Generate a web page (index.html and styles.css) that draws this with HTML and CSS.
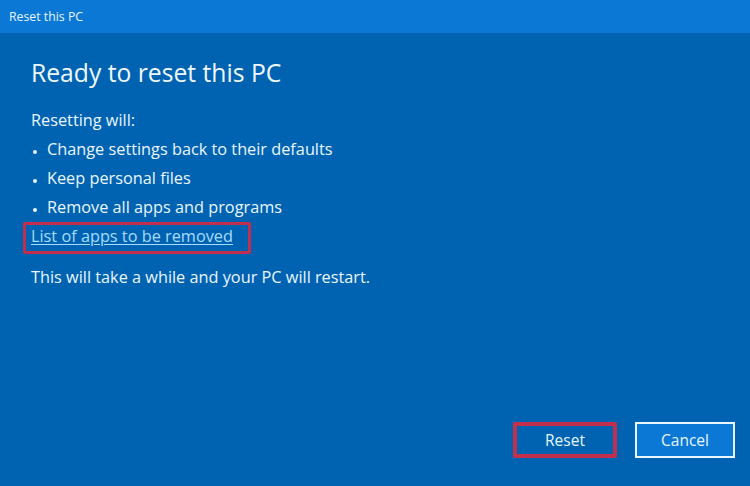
FILE: index.html
```html
<!DOCTYPE html>
<html lang="en">
<head>
<meta charset="utf-8">
<title>Reset this PC</title>
<link rel="stylesheet" href="styles.css">
</head>
<body>
<div class="dialog">
  <div class="titlebar">Reset this PC</div>
  <div class="content">
    <h1 class="heading">Ready to reset this PC</h1>
    <p class="line">Resetting will:</p>
    <ul class="bullets">
      <li>Change settings back to their defaults</li>
      <li>Keep personal files</li>
      <li>Remove all apps and programs</li>
    </ul>
    <div class="link-row"><a class="link" href="#">List of apps to be removed</a></div>
    <p class="line note">This will take a while and your PC will restart.</p>
    <div class="footer">
      <button class="btn btn-reset">Reset</button>
      <button class="btn btn-cancel">Cancel</button>
    </div>
  </div>
</div>
</body>
</html>
```

FILE: styles.css
```css
html, body {
  margin: 0;
  padding: 0;
  width: 750px;
  height: 486px;
  overflow: hidden;
}
body {
  font-family: "Open Sans", "Noto Sans", sans-serif;
  color: #eaf6ff;
  background: #0063b1;
}
.dialog {
  display: flex;
  flex-direction: column;
  height: 486px;
}
.titlebar {
  height: 33px;
  box-sizing: border-box;
  background: #0b78d6;
  padding: 8px 0 0 9px;
  font-size: 12.3px;
  line-height: 17px;
  color: #e8f5ff;
}
.content {
  flex: 1;
  display: flex;
  flex-direction: column;
  padding: 23px 15px 28px 31px;
}
.heading {
  margin: 0 0 16px 0;
  font-size: 24.7px;
  font-weight: 400;
  line-height: 34px;
  color: #eef8ff;
}
.line {
  margin: 0;
  font-size: 16.3px;
  line-height: 29px;
}
.bullets {
  list-style: none;
  margin: 0;
  padding: 0;
}
.bullets li {
  position: relative;
  padding-left: 16px;
  font-size: 16.3px;
  line-height: 29px;
}
.bullets li::before {
  content: "";
  position: absolute;
  left: 2px;
  top: 15px;
  width: 4px;
  height: 4px;
  border-radius: 50%;
  background: #eaf6ff;
}
.link-row {
  margin-left: -8px;
  display: flex;
}
.link {
  display: inline-block;
  border: 3px solid #c22f4c;
  border-radius: 2px;
  padding: 0 15px 0 5px;
  height: 26px;
  font-size: 16.3px;
  line-height: 23px;
  color: #a8dcff;
  text-decoration: underline;
  text-underline-offset: 2px;
  text-decoration-thickness: 1px;
}
.note {
  margin-top: 9px;
}
.footer {
  margin-top: auto;
  display: flex;
  justify-content: flex-end;
  align-items: center;
  gap: 18px;
}
.btn {
  font-family: "Open Sans", "Noto Sans", sans-serif;
  font-size: 15.5px;
  color: #e6f6ff;
  height: 36px;
  box-sizing: border-box;
  padding: 0;
  cursor: pointer;
}
.btn-reset {
  width: 104px;
  background: #0063b1;
  border: 4px solid #c22f4c;
  border-radius: 2px;
}
.btn-cancel {
  width: 100px;
  background: #0b78d6;
  border: 2px solid #e8f7ff;
}
```
